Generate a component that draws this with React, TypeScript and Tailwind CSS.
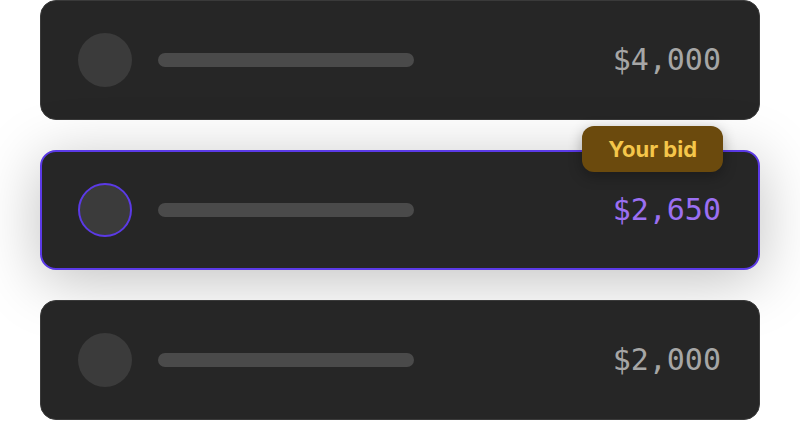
import React from 'react';

interface Bid {
  amount: string;
  mine?: boolean;
}

const bids: Bid[] = [
  { amount: '$4,000' },
  { amount: '$2,650', mine: true },
  { amount: '$2,000' },
];

const BidRow: React.FC<{ bid: Bid }> = ({ bid }) => (
  <div
    className={`relative h-[120px] rounded-[16px] bg-[#262626] flex items-center ${
      bid.mine
        ? 'border-2 border-[#5b3ae6] pl-[36px] pr-[37px] shadow-[0_10px_60px_rgba(0,0,0,0.25)]'
        : 'border border-[#3a3a3a] pl-[37px] pr-[38px]'
    }`}
  >
    <div
      className={`w-[54px] h-[54px] rounded-full bg-[#3b3b3b] ${
        bid.mine ? 'border-2 border-[#5b3ae6]' : ''
      }`}
    />
    <div className="ml-[26px] w-[256px] h-[14px] rounded-full bg-[#4a4a4a]" />
    <span
      className={`ml-auto text-[30px] leading-none ${bid.mine ? 'text-[#9b6ff2]' : 'text-[#a6a6a6]'}`}
      style={{ fontFamily: '"DejaVu Sans Mono", monospace' }}
    >
      {bid.amount}
    </span>
    {bid.mine && (
      <div className="absolute -top-[26px] right-[35px] h-[46px] px-[26px] rounded-[12px] bg-[#6b4a0d] flex items-center shadow-[0_4px_14px_rgba(0,0,0,0.3)]">
        <span
          className="text-[22px] font-bold text-[#f5c64a]"
          style={{ fontFamily: 'Inter, sans-serif' }}
        >
          Your bid
        </span>
      </div>
    )}
  </div>
);

export default function App() {
  return (
    <div className="w-[800px] h-[421px] bg-white overflow-hidden">
      <div className="flex flex-col gap-[30px] px-[40px] pt-0">
        {bids.map((b, i) => (
          <BidRow key={i} bid={b} />
        ))}
      </div>
    </div>
  );
}
